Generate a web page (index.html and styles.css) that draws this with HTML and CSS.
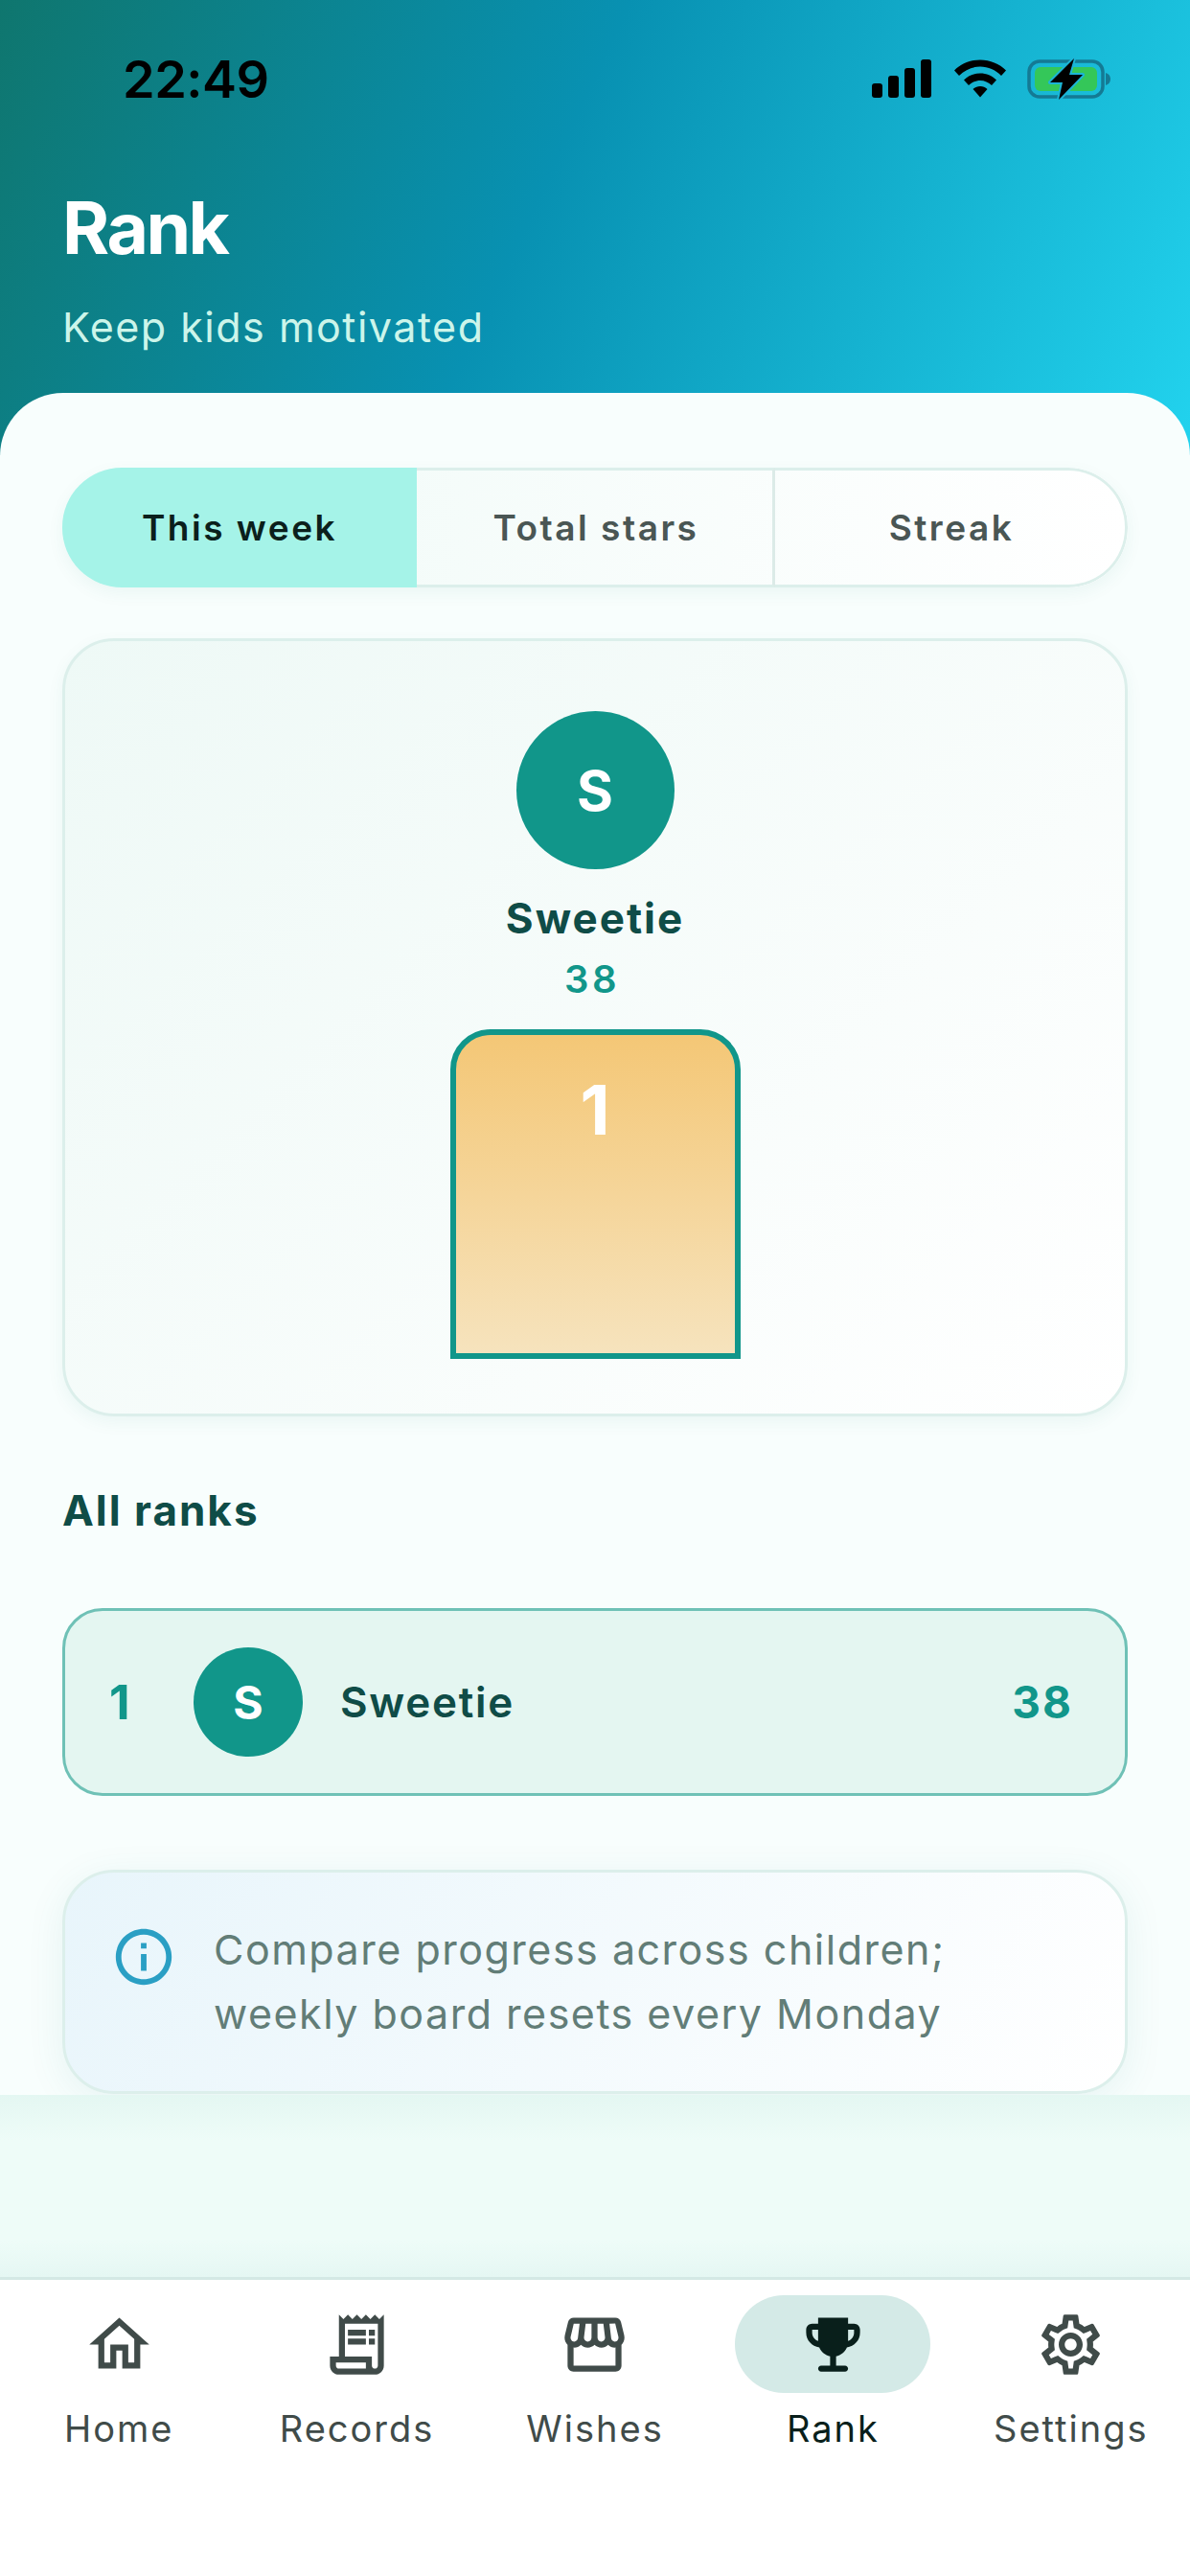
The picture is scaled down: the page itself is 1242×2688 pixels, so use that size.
FILE: index.html
```html
<!DOCTYPE html>
<html lang="en">
<head>
    <meta charset="UTF-8">
    <meta name="viewport" content="width=device-width, initial-scale=1.0">
    <title>Rank</title>
    <link rel="stylesheet" href="styles.css">
</head>
<body>
<div class="screen">

    <header class="header">
        <div class="status-bar">
            <span class="time">22:49</span>
            <div class="status-icons">
                <svg class="ic-signal" viewBox="0 0 62 40"><rect x="0" y="25" width="11" height="15" rx="3"/><rect x="17" y="17" width="11" height="23" rx="3"/><rect x="34" y="9" width="11" height="31" rx="3"/><rect x="51" y="0" width="11" height="40" rx="3"/></svg>
                <svg class="ic-wifi" viewBox="0 0 54 40"><path d="M0 11.500C7 4.500 16.500 0.500 27 0.500s20 4 27 11l-5 5.500C43 11 35.500 7.500 27 7.500S11 11 5 17z"/><path d="M10 21.500C14.500 17 20.500 14.500 27 14.500s12.500 2.500 17 7l-5 5.500C36 24 31.500 22 27 22s-9 2-12 5z"/><path d="M19.500 31c2-2 4.700-3 7.500-3s5.500 1 7.500 3L27 39.500z"/></svg>
                <svg class="ic-battery" viewBox="0 0 90 44">
                    <rect x="2" y="4" width="77" height="37" rx="11" fill="none" stroke="#147a94" stroke-width="3.500"/>
                    <rect x="8" y="10" width="65" height="25" rx="6" fill="#34c759"/>
                    <path d="M82 16c3 1 5 3 5 6.500s-2 5.500-5 6.500z" fill="#147a94"/>
                    <path d="M49 1L24 26H37L33 44L58 18H44Z" fill="#000" stroke="#1bb5d6" stroke-width="4" stroke-linejoin="round" paint-order="stroke"/>
                </svg>
            </div>
        </div>
        <h1 class="title">Rank</h1>
        <p class="subtitle">Keep kids motivated</p>
    </header>

    <main class="main">
        <div class="sheet">
            <div class="tabs">
                <div class="tab tab-active">This week</div>
                <div class="tab tab-line">Total stars</div>
                <div class="tab tab-last">Streak</div>
            </div>

            <section class="podium-card">
                <div class="avatar avatar-big">S</div>
                <div class="podium-name">Sweetie</div>
                <div class="podium-score">38</div>
                <div class="podium-block">1</div>
            </section>

            <h3 class="section-title">All ranks</h3>

            <div class="rank-row">
                <span class="rank-no">1</span>
                <div class="avatar avatar-small">S</div>
                <span class="rank-name">Sweetie</span>
                <span class="rank-score">38</span>
            </div>

            <div class="info-card">
                <svg class="ic-info" viewBox="0 0 24 24"><path d="M11 7h2v2h-2zm0 4h2v6h-2zm1-9C6.480 2 2 6.480 2 12s4.480 10 10 10 10-4.480 10-10S17.520 2 12 2zm0 18c-4.410 0-8-3.590-8-8s3.590-8 8-8 8 3.590 8 8-3.590 8-8 8z"/></svg>
                <p class="info-text">Compare progress across children;<br>weekly board resets every Monday</p>
            </div>
        </div>
    </main>

    <nav class="nav">
        <div class="nav-item">
            <div class="nav-icon">
                <svg viewBox="0 0 24 24"><path d="M12 5.690l5 4.500V18h-2v-6H9v6H7v-7.810l5-4.500M12 3L2 12h3v8h6v-6h2v6h6v-8h3L12 3z"/></svg>
            </div>
            <span>Home</span>
        </div>
        <div class="nav-item">
            <div class="nav-icon">
                <svg viewBox="0 0 24 24"><path d="M19.500 3.500L18 2l-1.500 1.500L15 2l-1.500 1.500L12 2l-1.500 1.500L9 2 7.500 3.500 6 2v14H3v3c0 1.660 1.340 3 3 3h12c1.660 0 3-1.340 3-3V2l-1.500 1.500zM19 19c0 .55-.45 1-1 1s-1-.45-1-1v-3H8V5h11v14zM15 7H9v2h6V7zm3 0h-2v2h2V7zm-3 3H9v2h6v-2zm3 0h-2v2h2v-2zM6 20c-.55 0-1-.45-1-1v-1h10v2H6z"/></svg>
            </div>
            <span>Records</span>
        </div>
        <div class="nav-item">
            <div class="nav-icon">
                <svg viewBox="0 0 24 24"><path d="M21.900 8.890l-1.050-4.370c-.22-.9-1-1.520-1.910-1.520H5.050c-.9 0-1.690.63-1.900 1.520L2.100 8.890c-.24 1.020-.02 2.060.62 2.880.08.11.19.19.28.29V19c0 1.100.9 2 2 2h14c1.100 0 2-.9 2-2v-6.940c.09-.09.2-.18.28-.28.64-.82.87-1.870.62-2.890zm-2.990-3.900l1.050 4.370c.1.42.01.84-.25 1.170-.14.18-.44.47-.94.47-.61 0-1.140-.49-1.210-1.140L16.980 5l1.930-.01zM13 5h1.960l.54 4.520c.05.39-.07.78-.33 1.070-.22.26-.54.41-.95.41-.67 0-1.220-.59-1.220-1.310V5zM8.490 9.520L9.040 5H11v4.690c0 .72-.55 1.310-1.290 1.310-.34 0-.65-.15-.89-.41-.25-.29-.37-.68-.33-1.070zm-4.450-.16L5.050 5h1.970l-.58 4.860c-.08.65-.6 1.140-1.210 1.140-.49 0-.8-.29-.93-.47-.27-.32-.36-.75-.26-1.170zM5 19v-6.030c.08.01.15.03.23.03.87 0 1.660-.36 2.240-.95.6.6 1.400.95 2.310.95.87 0 1.650-.36 2.230-.93.59.57 1.390.93 2.290.93.84 0 1.640-.35 2.240-.95.58.59 1.370.95 2.240.95.08 0 .15-.02.23-.03V19H5z"/></svg>
            </div>
            <span>Wishes</span>
        </div>
        <div class="nav-item nav-item-active">
            <div class="nav-icon">
                <svg viewBox="0 0 24 24"><path d="M19 5h-2V3H7v2H5c-1.100 0-2 .9-2 2v1c0 2.550 1.920 4.630 4.390 4.940.63 1.500 1.980 2.630 3.610 2.960V19H8c-.55 0-1 .45-1 1s.45 1 1 1h8c.55 0 1-.45 1-1s-.45-1-1-1h-3v-3.100c1.630-.33 2.980-1.460 3.610-2.960C19.080 12.630 21 10.550 21 8V7c0-1.100-.9-2-2-2zM5 8V7h2v3.820C5.840 10.400 5 9.300 5 8zm14 0c0 1.300-.84 2.400-2 2.820V7h2v1z"/></svg>
            </div>
            <span>Rank</span>
        </div>
        <div class="nav-item">
            <div class="nav-icon">
                <svg viewBox="0 0 24 24"><path d="M19.430 12.980c.04-.32.07-.64.07-.98 0-.34-.03-.66-.07-.98l2.110-1.650c.19-.15.24-.42.12-.64l-2-3.460c-.09-.16-.26-.25-.44-.25-.06 0-.12.01-.17.03l-2.490 1c-.52-.4-1.080-.73-1.690-.98l-.38-2.650C14.460 2.180 14.250 2 14 2h-4c-.25 0-.46.18-.49.42l-.38 2.650c-.61.25-1.170.59-1.690.98l-2.490-1c-.06-.02-.12-.03-.18-.03-.17 0-.34.09-.43.25l-2 3.460c-.13.22-.07.49.12.64l2.110 1.650c-.04.32-.07.65-.07.98 0 .33.03.66.07.98l-2.110 1.650c-.19.15-.24.42-.12.64l2 3.460c.09.16.26.25.44.25.06 0 .12-.01.17-.03l2.490-1c.52.4 1.080.73 1.690.98l.38 2.650c.03.24.24.42.49.42h4c.25 0 .46-.18.49-.42l.38-2.650c.61-.25 1.170-.59 1.690-.98l2.490 1c.06.02.12.03.18.03.17 0 .34-.09.43-.25l2-3.460c.12-.22.07-.49-.12-.64l-2.110-1.650zm-1.980-1.710c.04.31.05.52.05.73 0 .21-.02.43-.05.73l-.14 1.130.89.7 1.080.84-.7 1.210-1.270-.51-1.040-.42-.9.68c-.43.32-.84.56-1.250.73l-1.060.43-.16 1.130-.2 1.350h-1.400l-.19-1.350-.16-1.130-1.060-.43c-.43-.18-.83-.41-1.230-.71l-.91-.7-1.060.43-1.270.51-.7-1.210 1.080-.84.89-.7-.14-1.130c-.03-.31-.05-.54-.05-.74s.02-.43.05-.73l.14-1.130-.89-.7-1.080-.84.7-1.210 1.270.51 1.040.42.9-.68c.43-.32.84-.56 1.250-.73l1.060-.43.16-1.130.2-1.350h1.390l.19 1.350.16 1.130 1.060.43c.43.18.83.41 1.230.71l.91.7 1.060-.43 1.270-.51.7 1.210-1.070.85-.89.7.14 1.130zM12 8c-2.210 0-4 1.790-4 4s1.790 4 4 4 4-1.790 4-4-1.790-4-4-4zm0 6c-1.100 0-2-.9-2-2s.9-2 2-2 2 .9 2 2-.9 2-2 2z"/></svg>
            </div>
            <span>Settings</span>
        </div>
    </nav>

</div>
</body>
</html>
```

FILE: styles.css
```css
* {
    box-sizing: border-box;
}
body {
    margin: 0;
    font-family: Inter, "Noto Sans", sans-serif;
    background-color: #ffffff;
}
.screen {
    width: 1242px;
    height: 2688px;
    display: flex;
    flex-direction: column;
    overflow: hidden;
}

/* header */
.header {
    height: 475px;
    flex-shrink: 0;
    padding: 57px 0 0 65px;
    background: linear-gradient(115deg, #0f766e 0%, #0891b2 45%, #22d3ee 100%);
}
.status-bar {
    display: flex;
    justify-content: space-between;
    align-items: center;
    height: 50px;
    padding: 0 80px 0 63px;
}
.time {
    font-size: 54px;
    font-weight: 600;
    color: #000;
    letter-spacing: -0.5px;
}
.status-icons {
    display: flex;
    align-items: center;
}
.ic-signal {
    width: 62px;
    height: 40px;
    margin-right: 24px;
}
.ic-wifi {
    width: 54px;
    height: 40px;
    margin-right: 22px;
}
.ic-battery {
    width: 90px;
    height: 44px;
}
.title {
    margin: 88px 0 0;
    font-size: 75px;
    line-height: 85px;
    font-weight: 700;
    letter-spacing: -2.500px;
    color: #ffffff;
}
.subtitle {
    margin: 36px 0 0;
    font-size: 43px;
    line-height: 50px;
    letter-spacing: 1.500px;
    color: #ccf5ea;
}

/* main area */
.main {
    flex: 1;
    background: linear-gradient(180deg, #e4f7f2 90%, #eefcf8 92.5%, #eefcf8 98%, #e5f7f3 100%);
}
.sheet {
    height: 1776px;
    margin-top: -65px;
    padding: 78px 65px 0;
    border-radius: 66px 66px 0 0;
    background: #f8fefd;
    overflow: hidden;
    position: relative;
}
.tabs {
    display: flex;
    height: 125px;
    border-radius: 62px;
    overflow: hidden;
    background: linear-gradient(90deg, #effaf7, #ffffff);
    box-shadow: 0 6px 18px rgba(15, 118, 110, 0.06);
}
.tab {
    display: flex;
    align-items: center;
    justify-content: center;
    font-size: 37px;
    font-weight: 600;
    letter-spacing: 2.500px;
    color: #4a5654;
    border: solid #dcefeb;
    border-width: 3px 0;
}
.tab-active {
    width: 370px;
    border: none;
    background-color: #a5f3e8;
    color: #0b1f1c;
}
.tab-line {
    width: 374px;
    padding-left: 3px;
    border-right: 3px solid #dcebe8;
}
.tab-last {
    flex: 1;
    padding-left: 3px;
    border-right-width: 3px;
    border-radius: 0 62px 62px 0;
}

/* podium */
.podium-card {
    height: 812px;
    margin-top: 53px;
    padding-top: 73px;
    display: flex;
    flex-direction: column;
    align-items: center;
    border: 3px solid #dcefeb;
    border-radius: 54px;
    background: linear-gradient(135deg, #eef9f6 0%, #ffffff 100%);
    box-shadow: 0 6px 18px rgba(15, 118, 110, 0.06);
}
.avatar {
    display: flex;
    align-items: center;
    justify-content: center;
    border-radius: 50%;
    font-weight: 700;
    color: #ffffff;
    background-color: #11968a;
    flex-shrink: 0;
}
.avatar-big {
    width: 165px;
    height: 165px;
    font-size: 58px;
}
.podium-name {
    margin-top: 24px;
    font-size: 44px;
    line-height: 54px;
    font-weight: 700;
    letter-spacing: 2px;
    color: #0f4c47;
}
.podium-score {
    margin-top: 15px;
    padding-right: 6px;
    font-size: 40px;
    line-height: 44px;
    font-weight: 600;
    letter-spacing: 3.500px;
    color: #11968a;
}
.podium-block {
    width: 303px;
    height: 344px;
    margin-top: 30px;
    padding-top: 35px;
    border: 6px solid #11968a;
    border-radius: 42px 42px 0 0;
    background: linear-gradient(180deg, #f4c776 0%, #f6e3bd 100%);
    font-size: 72px;
    line-height: 85px;
    font-weight: 700;
    text-align: center;
    color: #ffffff;
}

/* list */
.section-title {
    margin: 72px 0 0;
    font-size: 44px;
    line-height: 52px;
    font-weight: 700;
    letter-spacing: 2px;
    color: #0f4c47;
}
.rank-row {
    display: flex;
    align-items: center;
    height: 196px;
    margin-top: 76px;
    padding: 0 54px 0 46px;
    border: 3px solid #6fc1b6;
    border-radius: 42px;
    background-color: #e4f6f1;
}
.rank-no {
    width: 88px;
    font-size: 50px;
    font-weight: 700;
    color: #11968a;
}
.avatar-small {
    width: 114px;
    height: 114px;
    font-size: 48px;
}
.rank-name {
    flex: 1;
    margin-left: 39px;
    font-size: 44px;
    font-weight: 600;
    letter-spacing: 1.700px;
    color: #0f4c47;
}
.rank-score {
    font-size: 46px;
    font-weight: 700;
    letter-spacing: 2px;
    color: #11968a;
}

.info-card {
    display: flex;
    align-items: center;
    height: 234px;
    margin-top: 77px;
    padding: 0 40px 0 47px;
    border: 3px solid #dcefeb;
    border-radius: 54px;
    background: linear-gradient(120deg, #e8f5fb 0%, #ffffff 100%);
    box-shadow: 0 8px 40px rgba(15, 118, 110, 0.08);
}
.ic-info {
    width: 70px;
    height: 70px;
    fill: #2a9fc4;
    flex-shrink: 0;
    align-self: flex-start;
    margin-top: 53px;
}
.info-text {
    margin: 0 0 0 38px;
    font-size: 43px;
    line-height: 67px;
    letter-spacing: 1.500px;
    color: #627d77;
}

/* bottom nav */
.nav {
    display: grid;
    grid-template-columns: repeat(5, 1fr);
    height: 312px;
    flex-shrink: 0;
    padding-top: 16px;
    border-top: 3px solid #d4e9e5;
    background-color: #ffffff;
}
.nav-item {
    display: flex;
    flex-direction: column;
    align-items: center;
    font-size: 38px;
    line-height: 46px;
    letter-spacing: 2px;
    color: #404b49;
}
.nav-icon {
    display: flex;
    align-items: center;
    justify-content: center;
    width: 204px;
    height: 102px;
    margin-bottom: 14px;
    border-radius: 51px;
}
.nav-icon svg {
    width: 75px;
    height: 75px;
    fill: #404b49;
}
.nav-item-active {
    color: #091f1b;
}
.nav-item-active .nav-icon {
    background-color: #d4eae7;
}
.nav-item-active .nav-icon svg {
    fill: #091f1b;
}
```
